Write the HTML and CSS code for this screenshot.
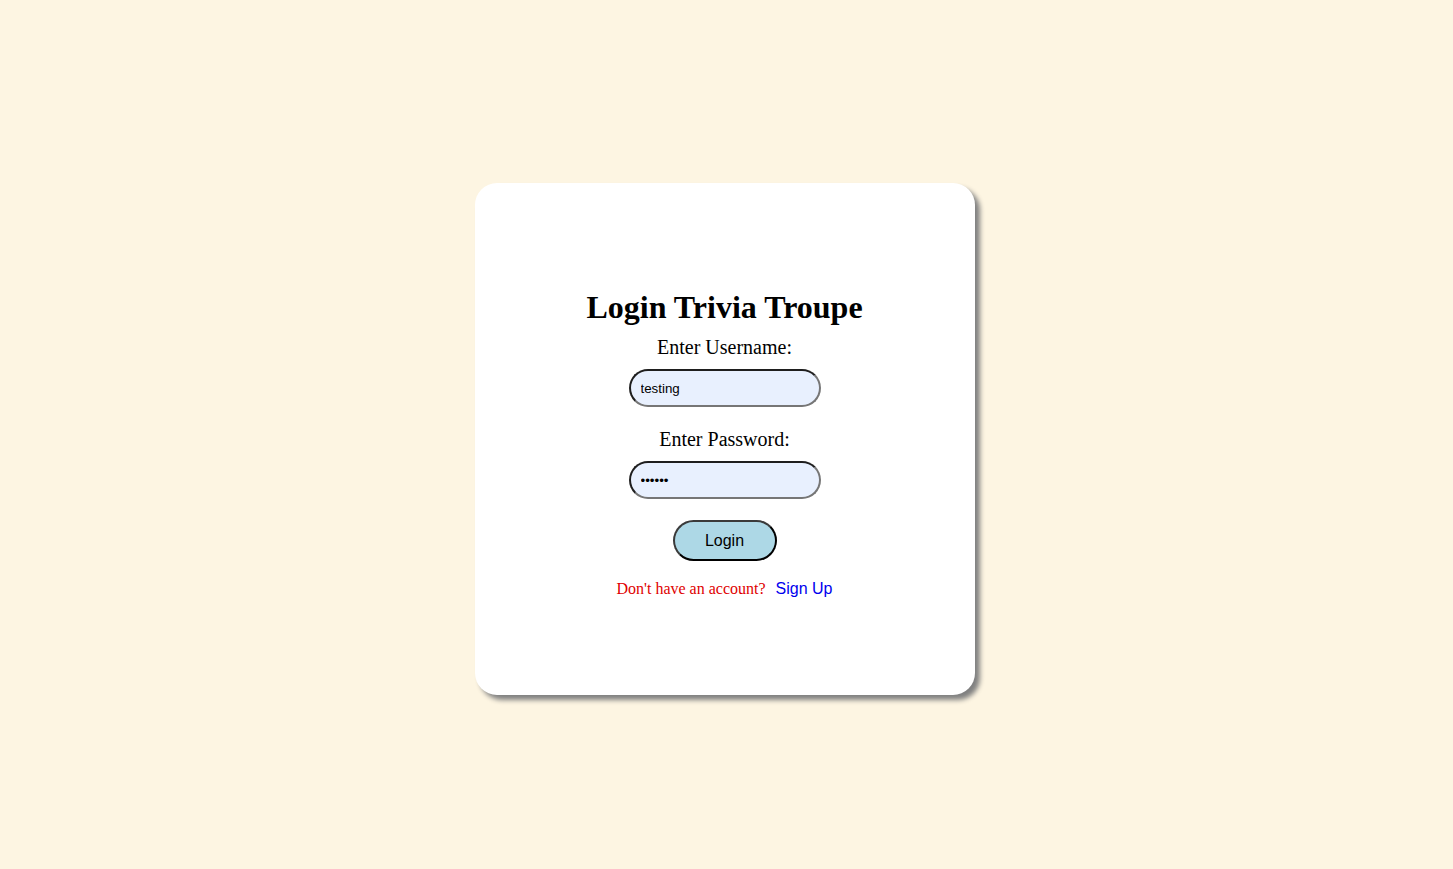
FILE: index.html
```html
<!DOCTYPE html>
<html lang="en">
<head>
<meta charset="utf-8">
<title>Login Trivia Troupe</title>
<link rel="stylesheet" href="styles.css">
</head>
<body>
<main class="page">
  <form class="card">
    <h1 class="title">Login Trivia Troupe</h1>
    <label class="label" for="user">Enter Username:</label>
    <input class="field" id="user" type="text" value="testing">
    <label class="label label-pass" for="pass">Enter Password:</label>
    <input class="field" id="pass" type="password" value="123456">
    <button class="btn" type="button">Login</button>
    <p class="signup"><span class="signup-text">Don't have an account?</span><a class="signup-link" href="#">Sign Up</a></p>
  </form>
</main>
</body>
</html>
```
FILE: styles.css
```css
html, body {
  margin: 0;
  padding: 0;
  height: 100%;
}
body {
  background: #fdf5e2;
  font-family: "Liberation Serif", "Times New Roman", serif;
}
.page {
  display: flex;
  justify-content: center;
  padding-top: 183px;
  padding-right: 4px;
}
.card {
  box-sizing: border-box;
  width: 500px;
  height: 512px;
  background: #fff;
  border-radius: 22px;
  box-shadow: 5px 5px 5px #808080;
  display: flex;
  flex-direction: column;
  align-items: center;
  padding-top: 106px;
}
.title {
  margin: 0;
  font-size: 32px;
  font-weight: bold;
  color: #000;
  line-height: 37px;
}
.label {
  margin-top: 10px;
  margin-bottom: 1px;
  font-size: 20px;
  line-height: 23px;
  color: #000;
}
.label-pass {
  margin-top: 21px;
}
.field {
  box-sizing: border-box;
  margin-top: 9px;
  width: 192px;
  height: 38px;
  border: 2px solid;
  border-color: #1e1e1e #767676 #767676 #1e1e1e;
  border-radius: 19px;
  background: #e8f0fe;
  padding: 0 10px;
  font-family: "Liberation Sans", Arial, sans-serif;
  font-size: 13.33px;
  color: #000;
  outline: none;
}
.btn {
  box-sizing: border-box;
  margin-top: 21px;
  width: 104px;
  height: 41px;
  border: 2px solid;
  border-color: #3a3a3a #000 #000 #3a3a3a;
  border-radius: 21px;
  background: #add8e6;
  font-family: "Liberation Sans", Arial, sans-serif;
  font-size: 16px;
  color: #000;
  padding: 0;
}
.signup {
  margin: 19px 0 0;
  font-size: 16px;
  line-height: 18px;
  display: flex;
  align-items: baseline;
  gap: 10px;
}
.signup-text {
  color: #e00000;
}
.signup-link {
  font-family: "Liberation Sans", Arial, sans-serif;
  color: #0000ee;
  text-decoration: none;
}
```
